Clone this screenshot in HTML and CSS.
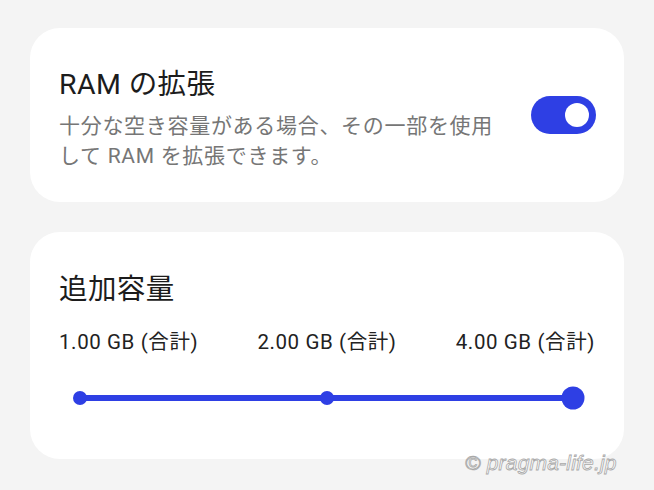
FILE: index.html
```html
<!DOCTYPE html>
<html lang="ja">
<head>
<meta charset="utf-8">
<title>RAM の拡張</title>
<link rel="stylesheet" href="styles.css">
</head>
<body>
<main class="page">
  <section class="card card-ram">
    <div class="ram-text">
      <h1 class="title">RAM の拡張</h1>
      <p class="desc">十分な空き容量がある場合、その一部を使用して RAM を拡張できます。</p>
    </div>
    <div class="toggle" role="switch" aria-checked="true"><span class="knob"></span></div>
  </section>
  <section class="card card-size">
    <h2 class="title">追加容量</h2>
    <div class="labels">
      <span class="label">1.00 GB (合計)</span>
      <span class="label">2.00 GB (合計)</span>
      <span class="label">4.00 GB (合計)</span>
    </div>
    <div class="slider">
      <div class="track"></div>
      <span class="dot dot-start"></span>
      <span class="dot dot-mid"></span>
      <span class="dot dot-end"></span>
    </div>
  </section>
  <div class="watermark">© pragma-life.jp</div>
</main>
</body>
</html>
```
FILE: styles.css
```css
* { box-sizing: border-box; }
html, body { margin: 0; padding: 0; }
body {
  background: #f4f4f4;
  font-family: Roboto, "Noto Sans CJK JP", sans-serif;
  width: 654px;
  height: 490px;
  overflow: hidden;
}
.page {
  position: relative;
  padding: 28px 30px 0 30px;
  display: flex;
  flex-direction: column;
  gap: 30px;
  height: 490px;
}
.card {
  background: #ffffff;
  border-radius: 30px;
}
.card-ram {
  height: 174px;
  padding: 39px 28px 31px 29px;
  display: flex;
  align-items: center;
  gap: 30px;
}
.ram-text { flex: 1; min-width: 0; }
.title {
  margin: 0;
  font-size: 28.5px;
  line-height: 36px;
  font-weight: 400;
  color: #1c1c1c;
  letter-spacing: 0.4px;
}
.desc {
  margin: 8px 0 0 0;
  font-size: 21px;
  line-height: 30px;
  color: #767676;
  letter-spacing: 0.7px;
}
.toggle {
  flex: none;
  width: 65px;
  height: 38px;
  border-radius: 19px;
  background: #2e3fe4;
  margin-bottom: 8px;
  display: flex;
  align-items: center;
  justify-content: flex-end;
  padding-right: 7px;
}
.knob {
  width: 24px;
  height: 24px;
  border-radius: 50%;
  background: #ffffff;
}
.card-size {
  height: 227px;
  padding: 40px 29px 0 29px;
  display: flex;
  flex-direction: column;
}
.labels {
  margin-top: 20px;
  display: flex;
  justify-content: space-between;
}
.label {
  font-size: 20.5px;
  line-height: 28px;
  font-weight: 400;
  color: #222222;
  letter-spacing: 0.6px;
}
.slider {
  position: relative;
  margin: 31px 22px 0 21px;
  height: 22px;
  display: flex;
  align-items: center;
}
.track {
  width: 100%;
  height: 6px;
  border-radius: 3px;
  background: #2e3fe4;
}
.dot {
  position: absolute;
  top: 50%;
  width: 14px;
  height: 14px;
  border-radius: 50%;
  background: #2e3fe4;
  transform: translate(-50%, -50%);
}
.dot-start { left: 0; }
.dot-mid { left: 50%; }
.dot-end { left: 100%; width: 23px; height: 23px; }
.watermark {
  position: absolute;
  left: 465px;
  top: 449px;
  font-family: "Liberation Sans", Arial, sans-serif;
  font-style: italic;
  font-size: 21px;
  line-height: 28px;
  color: #ffffff;
  -webkit-text-stroke: 0.8px #a8a8a8;
  letter-spacing: 0.2px;
}
```
